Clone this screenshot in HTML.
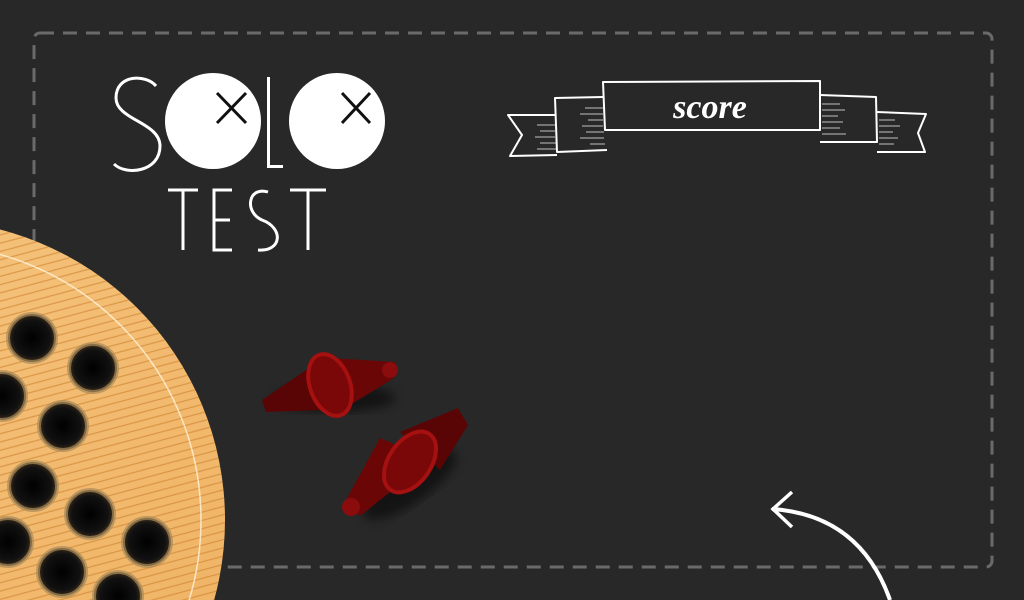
<!DOCTYPE html>
<html><head><style>
html,body{margin:0;padding:0;width:1024px;height:600px;overflow:hidden;background:#282828}
svg{display:block}
</style></head><body>
<svg width="1024" height="600" viewBox="0 0 1024 600">
<defs>
<radialGradient id="hole" cx="50%" cy="50%" r="50%"><stop offset="0" stop-color="#000"/><stop offset="0.75" stop-color="#111"/><stop offset="1" stop-color="#3a2a18"/></radialGradient>
<linearGradient id="wood" x1="0" y1="0" x2="1" y2="1"><stop offset="0" stop-color="#f8c884"/><stop offset="1" stop-color="#eeb060"/></linearGradient>
<pattern id="grain" width="40" height="8" patternUnits="userSpaceOnUse" patternTransform="rotate(-15)"><line x1="0" y1="3" x2="40" y2="3" stroke="#c97e2c" stroke-width="1.2" opacity="0.6"/></pattern>
<filter id="sh"><feGaussianBlur stdDeviation="5"/></filter>
</defs>
<rect width="1024" height="600" fill="#282828"/>
<rect x="34" y="33" width="958" height="534" rx="6" fill="none" stroke="#6a6a6a" stroke-width="3" stroke-dasharray="14 9"/>
<!-- logo -->
<path d="M156 86 C146 74 116 74 116 98 C116 120 160 122 160 146 C160 172 126 176 114 164" stroke="#fff" stroke-width="3" fill="none"/>
<circle cx="213" cy="121" r="48" fill="#fff"/>
<rect x="267" y="77" width="3" height="91" fill="#fff"/><rect x="267" y="165" width="16" height="3" fill="#fff"/>
<circle cx="337" cy="121" r="48" fill="#fff"/>
<path d="M217 93 L246 123 M246 93 L217 123" stroke="#111" stroke-width="3"/>
<path d="M342 93 L370 123 M370 93 L342 123" stroke="#111" stroke-width="3"/>
<g stroke="#fff" stroke-width="3" fill="none">
<path d="M168 190 H198 M183 190 V250"/>
<path d="M232 190 H214 V250 H232 M214 220 H230"/>
<path d="M268 192 C248 186 244 212 262 220 C284 228 282 252 258 250"/>
<path d="M290 190 H326 M308 190 V250"/>
</g>
<!-- board -->
<circle cx="-75" cy="520" r="300" fill="url(#wood)"/>
<circle cx="-75" cy="520" r="300" fill="url(#grain)"/>
<circle cx="-75" cy="520" r="276" fill="none" stroke="#fff2d8" stroke-width="1.5" opacity="0.8"/>
<g fill="url(#hole)" stroke="#a88a5a" stroke-width="4" stroke-opacity="0.7">
<circle cx="32" cy="338" r="24"/><circle cx="93" cy="368" r="24"/><circle cx="2" cy="396" r="24"/>
<circle cx="63" cy="426" r="24"/><circle cx="33" cy="486" r="24"/><circle cx="90" cy="514" r="24"/>
<circle cx="147" cy="542" r="24"/><circle cx="8" cy="542" r="24"/><circle cx="62" cy="572" r="24"/><circle cx="118" cy="596" r="24"/>
</g>
<!-- pegs -->
<ellipse cx="335" cy="398" rx="60" ry="14" fill="#000" opacity="0.5" filter="url(#sh)"/>
<ellipse cx="410" cy="485" rx="55" ry="18" fill="#000" opacity="0.5" filter="url(#sh)" transform="rotate(-35 410 485)"/>
<polygon points="262,400 266,412 322,410 318,362" fill="#5a0505"/>
<polygon points="330,358 395,362 394,378 345,408" fill="#6a0606"/>
<ellipse cx="330" cy="385" rx="20" ry="32" fill="#7a0808" stroke="#a51010" stroke-width="4" transform="rotate(-20 330 385)"/>
<circle cx="390" cy="370" r="8" fill="#8a0c0c"/>
<polygon points="400,432 458,408 468,425 440,470" fill="#5a0505"/>
<polygon points="346,500 380,438 430,460 360,516" fill="#6a0606"/>
<ellipse cx="410" cy="462" rx="21" ry="34" fill="#7a0808" stroke="#a51010" stroke-width="4" transform="rotate(35 410 462)"/>
<circle cx="351" cy="507" r="9" fill="#8a0c0c"/>
<!-- banner -->
<g stroke="#fff" stroke-width="2" fill="none" stroke-linejoin="round">
<path d="M603 82 L820 81 L820 130 L605 130 Z"/>
<path d="M603 97 L555 98 L557 152 L607 150"/>
<path d="M555 115 L508 115 L522 135 L510 156 L557 155"/>
<path d="M820 95 L876 97 L877 142 L820 142"/>
<path d="M877 112 L926 114 L918 133 L925 152 L877 152"/>
</g>
<g stroke="#fff" stroke-width="1" opacity="0.7">
<path d="M585 108 H603 M580 114 H603 M588 120 H603 M582 126 H603 M586 132 H604 M580 138 H604 M590 144 H605"/>
<path d="M537 125 H555 M540 131 H555 M535 137 H555 M540 143 H556 M537 149 H556"/>
<path d="M822 104 H840 M822 110 H845 M822 116 H838 M822 122 H843 M822 128 H840 M822 134 H846"/>
<path d="M879 120 H895 M879 126 H900 M879 132 H893 M879 138 H898 M879 144 H894"/>
</g>
<text x="710" y="118" text-anchor="middle" font-family="Liberation Serif, serif" font-style="italic" font-weight="bold" font-size="34" fill="#fff">score</text>
<!-- arrow -->
<path d="M772 509 Q860 515 890 600" stroke="#fff" stroke-width="4" fill="none"/>
<path d="M792 492 L773 509 L792 527" stroke="#fff" stroke-width="3.5" fill="none"/>
</svg>
</body></html>
